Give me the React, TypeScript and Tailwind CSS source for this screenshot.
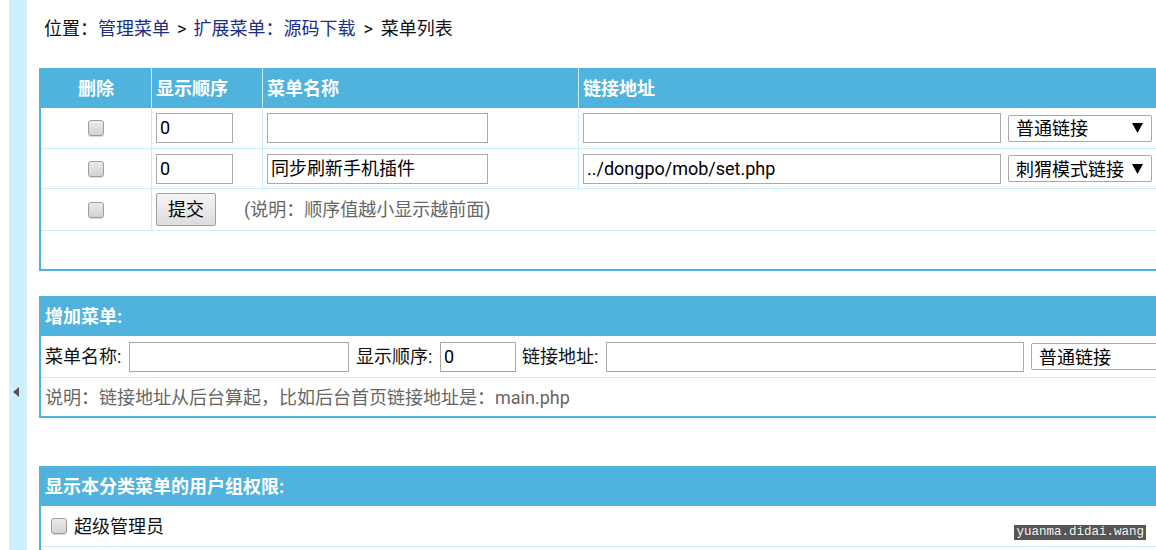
import React from "react";

const FONT = { fontFamily: 'Roboto, "Noto Sans CJK SC", sans-serif' };

function Checkbox() {
  return (
    <span className="inline-block size-[16px] shrink-0 rounded-[3px] border border-[#9c9c9c] bg-gradient-to-b from-[#ececec] to-[#d2d2d2] shadow-[0_1px_1px_rgba(0,0,0,0.15)]" />
  );
}

function Input({ w, value = "" }: { w: string; value?: string }) {
  return (
    <div
      className={`${w} flex h-[30px] shrink-0 items-center border border-[#a9a9a9] bg-white px-[3px] leading-none text-black`}
    >
      {value}
    </div>
  );
}

function FakeSelect({ w, label, arrow = true }: { w: string; label: string; arrow?: boolean }) {
  return (
    <div
      className={`${w} flex h-[27px] shrink-0 items-center justify-between rounded-[2px] border border-[#a9a9a9] bg-white pt-[2px] pr-[8px] pl-[7px] leading-none text-black`}
    >
      <span>{label}</span>
      {arrow && (
        <svg width="11" height="10" viewBox="0 0 11 10" className="mb-[2px]">
          <path d="M0 0 H11 L5.5 10 Z" fill="#000" />
        </svg>
      )}
    </div>
  );
}

function HeadCell({ w, children, center }: { w: string; children: React.ReactNode; center?: boolean }) {
  return (
    <div
      className={`${w} flex h-full shrink-0 items-center border-r border-[#c9ecfa] ${center ? "justify-center" : "pl-[4px]"}`}
    >
      {children}
    </div>
  );
}

function MenuRow({ name, link, kind, h }: { name: string; link: string; kind: string; h: string }) {
  return (
    <div className={`flex ${h} border-b border-[#c9ecfa]`}>
      <div className="flex w-[111px] shrink-0 items-center justify-center border-r border-[#c9ecfa]">
        <Checkbox />
      </div>
      <div className="flex w-[111px] shrink-0 items-center border-r border-[#c9ecfa] pl-[4px]">
        <Input w="w-[77px]" value="0" />
      </div>
      <div className="flex w-[316px] shrink-0 items-center border-r border-[#c9ecfa] pl-[4px]">
        <Input w="w-[221px]" value={name} />
      </div>
      <div className="flex flex-1 items-center gap-[7px] pl-[4px]">
        <Input w="w-[418px]" value={link} />
        <FakeSelect w="w-[144px]" label={kind} />
      </div>
    </div>
  );
}

export default function App() {
  return (
    <div
      className="relative flex h-[550px] w-[1156px] overflow-hidden bg-white text-[18px] text-[#111]"
      style={FONT}
    >
      <div className="w-[9px] shrink-0" />
      <div className="w-[18px] shrink-0 bg-[#cdf0fd] pt-[387px] pl-[4px]">
        <svg width="6" height="10" viewBox="0 0 6 10">
          <path d="M6 0 L0 5 L6 10 Z" fill="#555" />
        </svg>
      </div>

      <main className="min-w-0 flex-1 overflow-hidden pl-[12px]">
        <div className="flex h-[56px] items-center pl-[5px] pt-[1px]">
          <span>位置：</span>
          <span className="text-[#1c2f86]">管理菜单</span>
          <span className="px-[7px]">&gt;</span>
          <span className="text-[#1c2f86]">扩展菜单：源码下载</span>
          <span className="px-[8px]">&gt;</span>
          <span>菜单列表</span>
        </div>

        {/* 菜单列表 */}
        <div className="mt-[12px] w-[1200px] border-b-2 border-l-2 border-[#50b3de]">
          <div className="flex h-[40px] bg-[#50b3de] font-bold text-white">
            <HeadCell w="w-[111px]" center>
              删除
            </HeadCell>
            <HeadCell w="w-[111px]">显示顺序</HeadCell>
            <HeadCell w="w-[316px]">菜单名称</HeadCell>
            <div className="flex flex-1 items-center pl-[4px]">链接地址</div>
          </div>
          <MenuRow name="" link="" kind="普通链接" h="h-[41px]" />
          <MenuRow name="同步刷新手机插件" link="../dongpo/mob/set.php" kind="刺猬模式链接" h="h-[40px]" />
          <div className="flex h-[42px] border-b border-[#c9ecfa]">
            <div className="flex w-[111px] shrink-0 items-center justify-center border-r border-[#c9ecfa]">
              <Checkbox />
            </div>
            <div className="flex flex-1 items-center pl-[4px]">
              <button className="h-[33px] w-[60px] rounded-[2px] border border-[#a0a0a0] bg-gradient-to-b from-[#f6f6f6] to-[#dcdcdc] leading-none text-black">
                提交
              </button>
              <span className="ml-[28px] text-[#666]">(说明：顺序值越小显示越前面)</span>
            </div>
          </div>
          <div className="h-[38px]" />
        </div>

        {/* 增加菜单 */}
        <div className="mt-[25px] w-[1200px] border-b-2 border-l-2 border-[#50b3de]">
          <div className="flex h-[40px] items-center bg-[#50b3de] pl-[4px] font-bold text-white">增加菜单:</div>
          <div className="flex h-[42px] items-center border-b border-[#d2e9f5] pl-[4px]">
            <span className="w-[84px] shrink-0">菜单名称:</span>
            <Input w="w-[220px]" />
            <span className="w-[91px] shrink-0 pl-[7px]">显示顺序:</span>
            <Input w="w-[76px]" value="0" />
            <span className="w-[90px] shrink-0 pl-[6px]">链接地址:</span>
            <Input w="w-[418px]" />
            <div className="ml-[7px]">
              <FakeSelect w="w-[160px]" label="普通链接" arrow={false} />
            </div>
          </div>
          <div className="flex h-[38px] items-center pl-[4px] text-[#666]">
            说明：链接地址从后台算起，比如后台首页链接地址是：main.php
          </div>
        </div>

        {/* 用户组权限 */}
        <div className="mt-[48px] w-[1200px] border-l-2 border-[#50b3de]">
          <div className="flex h-[40px] items-center bg-[#50b3de] pl-[4px] font-bold text-white">
            显示本分类菜单的用户组权限:
          </div>
          <div className="flex h-[41px] items-center gap-[7px] border-b border-[#c9ecfa] pl-[10px]">
            <Checkbox />
            <span>超级管理员</span>
          </div>
          <div className="h-[20px]" />
        </div>
      </main>

      <div
        className="absolute top-[525px] right-[10px] flex h-[15px] items-center bg-[#555] px-[2px] text-[12.5px] leading-none text-[#f4f4f4]"
        style={{ fontFamily: '"Liberation Mono", monospace' }}
      >
        yuanma.didai.wang
      </div>
    </div>
  );
}
